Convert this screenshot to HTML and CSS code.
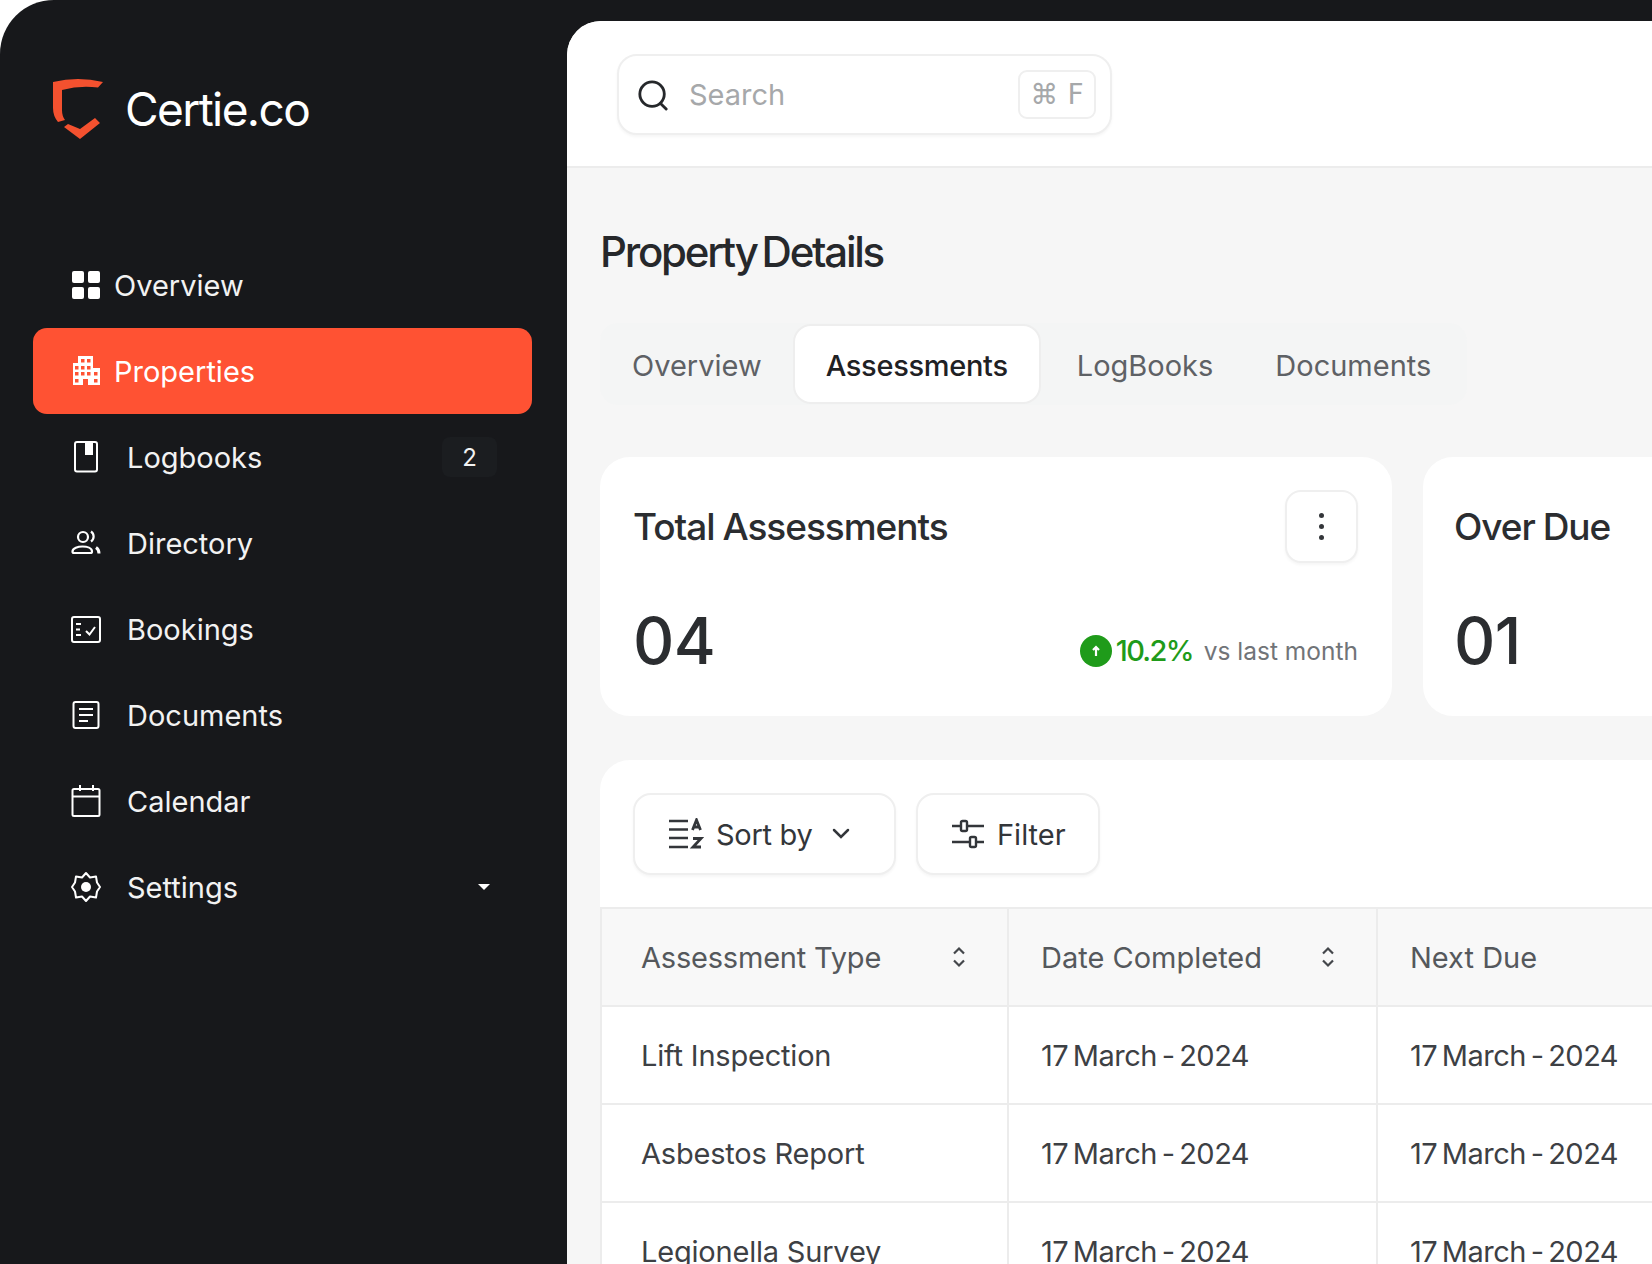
FILE: index.html
```html
<!DOCTYPE html>
<html lang="en">
<head>
    <meta charset="UTF-8">
    <meta name="viewport" content="width=device-width, initial-scale=1.0">
    <title>Certie.co - Property Details</title>
    <link rel="stylesheet" href="styles.css">
</head>
<body>
<div class="shell">
    <aside class="sidebar">
        <div class="brand">
            <svg class="brand-mark" width="50" height="62" viewBox="0 0 50 62" fill="#f4512f">
                <path d="M0 4Q25 -2 50 4L45 9.500Q27 7 9 12L9 32Q9 38 12 42L5 44Q0 38 0 30Z"/>
                <path d="M11 49L27 61L47 45L42 40L27 51L15 46Z"/>
            </svg>
            <span class="brand-name">Certie.co</span>
        </div>
        <nav class="nav">
            <a class="nav-item tight">
                <svg class="nav-icon" viewBox="0 0 30 30" fill="#fff"><rect x="1" y="1" width="12" height="12" rx="2"/><rect x="17" y="1" width="12" height="12" rx="2"/><rect x="1" y="17" width="12" height="12" rx="2"/><rect x="17" y="17" width="12" height="12" rx="2"/></svg>
                <span>Overview</span>
            </a>
            <a class="nav-item tight active">
                <svg class="nav-icon" viewBox="0 0 30 30" fill="#ff5233"><path d="M7 0H22V12H29V29H2V7H7Z" fill="#fff"/><rect x="10" y="3" width="3.500" height="3.500"/><rect x="16" y="3" width="3.500" height="3.500"/><rect x="4" y="10" width="3.500" height="3.500"/><rect x="10" y="10" width="3.500" height="3.500"/><rect x="16" y="10" width="3.500" height="3.500"/><rect x="4" y="16" width="3.500" height="3.500"/><rect x="10" y="16" width="3.500" height="3.500"/><rect x="16" y="16" width="3.500" height="3.500"/><rect x="23" y="16" width="3.500" height="3.500"/><rect x="4" y="23" width="3.500" height="3.500"/><rect x="12" y="23" width="5" height="6"/><rect x="23" y="23" width="3.500" height="3.500"/></svg>
                <span>Properties</span>
            </a>
            <a class="nav-item">
                <svg class="nav-icon" viewBox="0 0 30 30" fill="none" stroke="#fff" stroke-width="2"><rect x="4" y="0" width="22" height="29.500" rx="2"/><rect x="14" y="0" width="8" height="13" fill="#fff" stroke="none"/></svg>
                <span>Logbooks</span>
                <span class="nav-badge">2</span>
            </a>
            <a class="nav-item">
                <svg class="nav-icon" viewBox="0 0 30 30" fill="none" stroke="#fff" stroke-width="2.200"><circle cx="12" cy="9" r="5"/><path d="M20 3.500C23.500 6 23.500 11 20 13.500"/><path d="M1.500 23.500C1.500 20 7 18.500 11.500 18.500C16 18.500 21 20 21 23.500C21 24.500 20.500 25 19.500 25H3C2 25 1.500 24.500 1.500 23.500Z"/><path d="M28 25.500C28 22.500 26.500 20.500 25 19.500" stroke-width="3"/></svg>
                <span>Directory</span>
            </a>
            <a class="nav-item">
                <svg class="nav-icon" viewBox="0 0 30 30" fill="none" stroke="#fff" stroke-width="2"><rect x="1" y="3" width="28" height="25" rx="2"/><path d="M5 10H10M5 15.500H9M5 21H10M15 17L18.500 20.500L24 13"/></svg>
                <span>Bookings</span>
            </a>
            <a class="nav-item">
                <svg class="nav-icon" viewBox="0 0 30 30" fill="none" stroke="#fff" stroke-width="2"><rect x="2.500" y="2" width="25" height="26" rx="2"/><path d="M8 9H22M8 15H22M8 21H17"/></svg>
                <span>Documents</span>
            </a>
            <a class="nav-item">
                <svg class="nav-icon" viewBox="0 0 30 30" fill="none" stroke="#fff" stroke-width="2"><rect x="1.500" y="3" width="27" height="27" rx="1.500"/><path d="M1.500 10.500H28.500M9 -1V5M22 -1V5"/></svg>
                <span>Calendar</span>
            </a>
            <a class="nav-item">
                <svg class="nav-icon" viewBox="0 0 30 30" fill="none" stroke="#fff" stroke-width="2"><path d="M15 1L19 5.500L25 4.500L26 10.500L29 15L26 19.500L25 25.500L19 24.500L15 29L11 24.500L5 25.500L4 19.500L1 15L4 10.500L5 4.500L11 5.500Z" stroke-linejoin="round"/><circle cx="15" cy="15" r="5" fill="#fff" stroke="none"/></svg>
                <span>Settings</span>
                <span class="nav-caret"></span>
            </a>
        </nav>
    </aside>

    <main class="main">
        <header class="topbar">
            <div class="search">
                <svg width="32" height="32" viewBox="0 0 34 34" fill="none" stroke="#26282b" stroke-width="3" stroke-linecap="round"><circle cx="16" cy="16" r="13"/><path d="M25 26L31 32"/></svg>
                <span class="search-text">Search</span>
                <span class="search-key">⌘ F</span>
            </div>
        </header>

        <section class="content">
            <h1 class="page-title">Property Details</h1>

            <div class="tabs">
                <a class="tab">Overview</a>
                <a class="tab selected">Assessments</a>
                <a class="tab">LogBooks</a>
                <a class="tab">Documents</a>
            </div>

            <div class="stats">
                <div class="stat-card first">
                    <div class="stat-head">
                        <h2>Total Assessments</h2>
                        <button class="kebab"><i></i><i></i><i></i></button>
                    </div>
                    <div class="stat-foot">
                        <span class="stat-value">04</span>
                        <span class="trend">
                            <svg width="32" height="32" viewBox="0 0 32 32"><circle cx="16" cy="16" r="16" fill="#1f9b1a"/><path d="M16 21V12M13 15L16 12L19 15" fill="none" stroke="#fff" stroke-width="2.200"/></svg>
                            <b>10.2%</b>
                            <span>vs last month</span>
                        </span>
                    </div>
                </div>
                <div class="stat-card second">
                    <div class="stat-head">
                        <h2>Over Due</h2>
                    </div>
                    <div class="stat-foot">
                        <span class="stat-value">01</span>
                    </div>
                </div>
            </div>

            <div class="panel">
                <div class="toolbar">
                    <button class="tool-btn sort">
                        <svg width="36" height="32" viewBox="0 0 36 32" fill="none" stroke="#33363a" stroke-width="2.400"><path d="M1 3H20M1 11.500H20M1 20H20M1 29H20"/><path d="M24.500 12L28.500 2L32.500 12M26 9H31M25 20.500H33L25 29H33" stroke-width="2.800"/></svg>
                        <span>Sort by</span>
                        <svg class="chev" width="18" height="12" viewBox="0 0 18 12" fill="none" stroke="#33363a" stroke-width="2.500" stroke-linecap="round"><path d="M2 2L9 9L16 2"/></svg>
                    </button>
                    <button class="tool-btn filter">
                        <svg width="34" height="30" viewBox="0 0 34 30" fill="none" stroke="#33363a" stroke-width="2.400"><path d="M1 7H9M17 7H33M1 23H18M26 23H33"/><rect x="10" y="2" width="6" height="10" rx="1.500"/><rect x="19" y="18" width="6" height="10" rx="1.500"/></svg>
                        <span>Filter</span>
                    </button>
                </div>

                <table class="grid">
                    <colgroup><col class="col-type"><col class="col-date"><col class="col-due"></colgroup>
                    <thead>
                        <tr>
                            <th class="first-cell"><div class="th-in">Assessment Type
                                <svg width="14" height="22" viewBox="0 0 14 22" fill="none" stroke="#44474b" stroke-width="2.200"><path d="M2 7.500L7 2.500L12 7.500M2 14.500L7 19.500L12 14.500"/></svg></div></th>
                            <th><div class="th-in">Date Completed
                                <svg width="14" height="22" viewBox="0 0 14 22" fill="none" stroke="#44474b" stroke-width="2.200"><path d="M2 7.500L7 2.500L12 7.500M2 14.500L7 19.500L12 14.500"/></svg></div></th>
                            <th>Next Due</th>
                        </tr>
                    </thead>
                    <tbody>
                        <tr><td class="first-cell">Lift Inspection</td><td class="date">17 March - 2024</td><td class="date">17 March - 2024</td></tr>
                        <tr><td class="first-cell">Asbestos Report</td><td class="date">17 March - 2024</td><td class="date">17 March - 2024</td></tr>
                        <tr><td class="first-cell">Legionella Survey</td><td class="date">17 March - 2024</td><td class="date">17 March - 2024</td></tr>
                    </tbody>
                </table>
            </div>
        </section>
    </main>
</div>
</body>
</html>
```
FILE: styles.css
```css
* {
    box-sizing: border-box;
}

body {
    margin: 0;
    height: 1264px;
    overflow: hidden;
    background-color: #fff;
    font-family: 'Inter', 'Liberation Sans', sans-serif;
    color: #2b2d30;
}

.shell {
    display: flex;
    height: 1264px;
    background-color: #17181b;
    border-top-left-radius: 54px;
    overflow: hidden;
}

/* sidebar */
.sidebar {
    width: 567px;
    flex-shrink: 0;
    padding: 78px 35px 0 33px;
}

.brand {
    display: flex;
    align-items: center;
    gap: 22px;
    height: 61px;
    padding-left: 20px;
}

.brand-name {
    font-size: 46px;
    font-weight: 400;
    letter-spacing: -1.600px;
    color: #fff;
}

.nav {
    margin-top: 103px;
    display: flex;
    flex-direction: column;
}

.nav-item {
    height: 86px;
    display: flex;
    align-items: center;
    gap: 26px;
    padding: 0 35px 0 38px;
    font-size: 29px;
    color: #f2f2f2;
    border-radius: 14px;
}

.nav-item.tight {
    gap: 13px;
}

.nav-item.active {
    background-color: #ff5233;
    color: #fff;
}

.nav-icon {
    width: 30px;
    height: 30px;
    flex-shrink: 0;
    overflow: visible;
}

.nav-badge {
    margin-left: auto;
    width: 55px;
    height: 40px;
    border-radius: 8px;
    background-color: #1b1d20;
    display: flex;
    align-items: center;
    justify-content: center;
    font-size: 24px;
}

.nav-caret {
    margin-left: auto;
    margin-right: 7px;
    border-left: 6px solid transparent;
    border-right: 6px solid transparent;
    border-top: 6px solid #fff;
}

/* main area */
.main {
    flex: 1;
    min-width: 0;
    margin-top: 21px;
    background-color: #f6f6f6;
    border-top-left-radius: 34px;
    overflow: hidden;
}

.topbar {
    height: 147px;
    padding: 33px 50px;
    background-color: #fff;
    border-bottom: 2px solid #ececec;
}

.search {
    width: 495px;
    height: 81px;
    display: flex;
    align-items: center;
    padding: 0 14px 0 18px;
    background-color: #fff;
    border: 2px solid #efefef;
    border-radius: 20px;
    box-shadow: 0 2px 3px rgba(0, 0, 0, 0.04);
}

.search-text {
    margin-left: 20px;
    font-size: 29px;
    color: #a6a8aa;
}

.search-key {
    margin-left: auto;
    width: 78px;
    height: 49px;
    display: flex;
    align-items: center;
    justify-content: center;
    font-size: 28px;
    font-family: 'DejaVu Sans', sans-serif;
    color: #a6a8aa;
    border: 2px solid #efefef;
    border-radius: 9px;
}

.content {
    padding: 58px 0 0 33px;
}

.page-title {
    margin: 0 0 45px;
    height: 52px;
    line-height: 52px;
    font-size: 42px;
    font-weight: 500;
    letter-spacing: -2.250px;
    word-spacing: -4px;
    color: #26282b;
}

.tabs {
    display: inline-flex;
    align-items: center;
    height: 82px;
    padding: 0 5px 0 1px;
    background-color: #f4f5f5;
    border-radius: 18px;
    font-size: 29px;
    color: #5e6165;
    vertical-align: top;
}

.tab {
    height: 80px;
    line-height: 84px;
    padding: 0 31px;
}

.tab.selected {
    margin-right: 5px;
    padding: 0 31px;
    background-color: #fff;
    color: #1f2124;
    font-weight: 500;
    letter-spacing: -0.300px;
    border: 2px solid #eeeeee;
    border-radius: 18px;
    line-height: 80px;
}

.stats {
    display: flex;
    gap: 31px;
    margin-top: 52px;
}

.stat-card {
    flex-shrink: 0;
    height: 259px;
    padding: 33px 34px 0 33px;
    background-color: #fff;
    border-radius: 30px;
}

.stat-card.first {
    width: 792px;
}

.stat-card.second {
    width: 500px;
    padding-left: 31px;
}

.stat-head {
    display: flex;
    align-items: center;
    justify-content: space-between;
    height: 73px;
}

.stat-head h2 {
    margin: 0;
    font-size: 37px;
    font-weight: 500;
    letter-spacing: -1.030px;
    word-spacing: -1px;
    color: #2b2d30;
}

.kebab {
    width: 73px;
    height: 73px;
    display: flex;
    flex-direction: column;
    align-items: center;
    justify-content: center;
    gap: 6px;
    padding: 0;
    background-color: #fff;
    border: 2px solid #efefef;
    border-radius: 16px;
    box-shadow: 0 2px 3px rgba(0, 0, 0, 0.04);
}

.kebab i {
    width: 5px;
    height: 5px;
    border-radius: 50%;
    background-color: #33363a;
}

.stat-foot {
    display: flex;
    align-items: center;
    justify-content: space-between;
    margin-top: 36px;
    height: 82px;
}

.stat-value {
    font-size: 64px;
    font-weight: 500;
    letter-spacing: -0.500px;
    color: #2b2d30;
}

.trend {
    display: flex;
    align-items: center;
    margin-top: 21px;
    font-size: 24.500px;
    color: #717478;
}

.trend b {
    margin: 0 11px 0 4px;
    font-size: 29px;
    font-weight: 500;
    letter-spacing: -1.700px;
    color: #1f9b1a;
}

/* table panel */
.panel {
    margin-top: 44px;
    background-color: #fff;
    border-top-left-radius: 30px;
}

.toolbar {
    display: flex;
    gap: 20px;
    padding: 33px 33px 32px;
}

.tool-btn {
    height: 82px;
    display: flex;
    align-items: center;
    padding: 0;
    background-color: #fff;
    border: 2px solid #efefef;
    border-radius: 18px;
    box-shadow: 0 2px 3px rgba(0, 0, 0, 0.04);
    font-family: inherit;
    font-size: 29px;
    color: #33363a;
}

.sort {
    width: 263px;
    gap: 12px;
    padding-left: 33px;
}

.sort span {
    letter-spacing: -0.300px;
}

.chev {
    margin-left: 8px;
}

.filter {
    width: 184px;
    gap: 12px;
    padding-left: 33px;
}

.grid {
    width: 1060px;
    table-layout: fixed;
    border-collapse: collapse;
    font-size: 29px;
    color: #3d4044;
}

.col-type {
    width: 407px;
}

.col-date {
    width: 369px;
}

.grid th,
.grid td {
    height: 98px;
    padding: 0 0 0 32px;
    border: 2px solid #ececec;
    text-align: left;
    font-weight: 400;
    white-space: nowrap;
}

.grid th {
    background-color: #f8f8f8;
    color: #55585c;
}

.grid .first-cell {
    padding-left: 39px;
    letter-spacing: -0.200px;
}

.grid .date {
    letter-spacing: -0.500px;
    word-spacing: -3px;
}

.th-in {
    display: flex;
    align-items: center;
    justify-content: space-between;
    padding-right: 41px;
}
```
